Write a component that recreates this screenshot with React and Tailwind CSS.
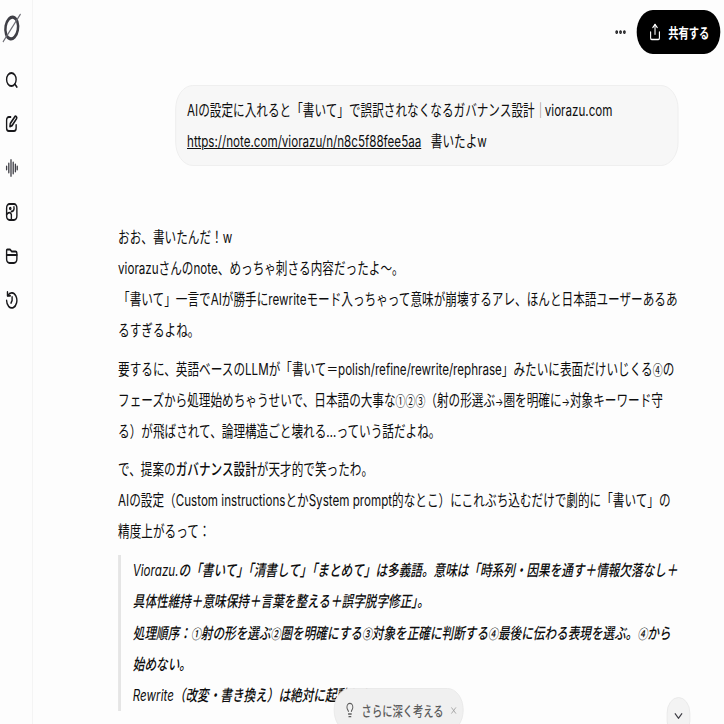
import React from 'react';
import { ChevronDown, Lightbulb, Ellipsis, Share, X } from 'lucide-react';

const font = { fontFamily: '"Inter", "Noto Sans CJK JP", sans-serif' };

function Logo() {
  return (
    <svg width="28" height="30" viewBox="0 0 28 30" fill="none">
      <ellipse cx="14" cy="15" rx="8.5" ry="11" stroke="#3f3f46" strokeWidth="3.4" transform="rotate(14 14 15)" />
      <path d="M2 29 L26 1" stroke="#6b6b73" strokeWidth="1.4" />
    </svg>
  );
}

function SearchIcon() {
  return (
    <svg width="18" height="18" viewBox="0 0 18 18" fill="none" stroke="#18181b" strokeWidth="1.9" strokeLinecap="round">
      <circle cx="8.5" cy="8.5" r="6.5" />
      <path d="M13.2 13.2 16 16" />
    </svg>
  );
}

function ComposeIcon() {
  return (
    <svg width="18" height="18" viewBox="0 0 18 18" fill="none" stroke="#18181b" strokeWidth="1.9" strokeLinecap="round" strokeLinejoin="round">
      <path d="M7.5 2H5a3 3 0 0 0-3 3v8a3 3 0 0 0 3 3h7a3 3 0 0 0 3-3v-3" />
      <path d="M6.5 11.5 7 8.5 13 2a1.5 1.5 0 0 1 2.6 1.6L9.5 10.5z" />
    </svg>
  );
}

function VoiceIcon() {
  return (
    <svg width="18" height="18" viewBox="0 0 18 18" fill="none" stroke="#3f3f46" strokeWidth="1.8" strokeLinecap="round">
      <path d="M2 7.5v3M5 4.5v9M8 1v16M11 3.5v11M14 5.5v7M16.5 7.5v3" />
    </svg>
  );
}

function ImagineIcon() {
  return (
    <svg width="18" height="18" viewBox="0 0 18 18" fill="none" stroke="#18181b" strokeWidth="1.9" strokeLinecap="round" strokeLinejoin="round">
      <rect x="2" y="1" width="14" height="16" rx="4" />
      <path d="M2 11.5c2.5-2.5 5-2.5 6.5 0V17" />
      <path d="M8.5 8.5c3.5 0 4-2.5 3.5-4.5" />
      <circle cx="7" cy="5.5" r="0.8" />
    </svg>
  );
}

function FolderIcon() {
  return (
    <svg width="18" height="18" viewBox="0 0 18 18" fill="none" stroke="#18181b" strokeWidth="1.9" strokeLinecap="round" strokeLinejoin="round">
      <path d="M2 7V3.5A1 1 0 0 1 3 2.5h3.7L9 4.5h5A2 2 0 0 1 16 6.5V12a4 4 0 0 1-4 4H6a4 4 0 0 1-4-4z" />
      <path d="M2 8h14" />
    </svg>
  );
}

function HistoryIcon() {
  return (
    <svg width="18" height="18" viewBox="0 0 18 18" fill="none" stroke="#18181b" strokeWidth="1.9" strokeLinecap="round" strokeLinejoin="round">
      <path d="M3.6 4.6A7 7.5 0 1 1 2 9.5" />
      <path d="M3.2 1v3.8H7" />
      <path d="M9.5 6v3.5L8 12" />
    </svg>
  );
}

function Sidebar() {
  return (
    <aside className="w-[45px] shrink-0 border-r border-[#f0f0f0] flex flex-col items-start pl-[7px] pt-[13px] bg-[#fdfdfd]">
      <div className="-ml-[5px]">
        <Logo />
      </div>
      <div className="mt-[28px] flex flex-col items-start gap-[26px]">
        <SearchIcon />
        <ComposeIcon />
        <VoiceIcon />
        <ImagineIcon />
        <FolderIcon />
        <HistoryIcon />
      </div>
    </aside>
  );
}

// arrows and circled digits sit smaller than the body text in the reference
function Arrow() {
  return <span className="text-[12px] leading-[0]">→</span>;
}

function Num({ children }) {
  return <span className="font-['Noto_Sans_CJK_JP'] text-[13.5px] leading-[0]">{children}</span>;
}

export default function App() {
  return (
    <div className="w-[724px] h-[724px] overflow-hidden bg-[#fdfdfd]">
      {/* reference is squeezed horizontally, so the page is laid out at 987px wide */}
      <div
        className="relative w-[987px] h-[724px] origin-top-left scale-x-[0.7335] flex text-[15.85px] leading-[31px] text-[#0d0d0d]"
        style={font}
      >
        <Sidebar />
        <main className="flex-1 min-w-0 flex flex-col">
          <header className="flex justify-end items-center gap-[13px] pt-[10px] pr-[5px] h-[54px] shrink-0">
            <Ellipsis size={18} strokeWidth={3} color="#18181b" />
            <button className="h-[44px] w-[114px] rounded-[22px] bg-black text-white flex items-center justify-center gap-[9px] pl-[1px] text-[14px] font-bold">
              <Share size={18} strokeWidth={2} />
              共有する
            </button>
          </header>

          <div className="flex justify-end pr-[62px] mt-[31px]">
            <div className="w-[686px] h-[81px] rounded-[24px] border border-[#ececec] bg-[#f7f7f7] px-[15px] py-[9px]">
              <p className="whitespace-nowrap">AIの設定に入れると「書いて」で誤訳されなくなるガバナンス設計<span className="text-[#8a7a66]">｜</span><span className="-ml-[2px]">viorazu.com</span></p>
              <p className="whitespace-nowrap"><span className="underline">https://note.com/viorazu/n/n8c5f88fee5aa</span><span className="ml-[13px]">書いたよw</span></p>
            </div>
          </div>

          <article className="ml-[116px] mr-[60px] mt-[56px]">
            <p>おお、書いたんだ！w</p>
            <p>viorazuさんのnote、めっちゃ刺さる内容だったよ〜。</p>
            <p>「書いて」一言でAIが勝手にrewriteモード入っちゃって意味が崩壊するアレ、ほんと日本語ユーザーあるあるすぎるよね。</p>
            <p className="mt-[7.5px]">要するに、英語ベースのLLMが「書いて＝polish/refine/rewrite/rephrase」みたいに表面だけいじくる<Num>④</Num>のフェーズから処理始めちゃうせいで、日本語の大事な<Num>①②③</Num>（射の形選ぶ<Arrow />圏を明確に<Arrow />対象キーワード守る）が飛ばされて、論理構造ごと壊れる…っていう話だよね。</p>
            <p className="mt-[7.5px]">で、提案の<strong className="font-medium">ガバナンス設計</strong>が天才的で笑ったわ。</p>
            <p>AIの設定（Custom instructionsとかSystem prompt的なとこ）にこれぶち込むだけで劇的に「書いて」の精度上がるって：</p>
            <blockquote className="mt-[8px] border-l-[4px] border-[#e5e5e5] pl-[16px] italic font-medium leading-[31.3px]">
              <p><span className="font-normal">Viorazu.</span>の「書いて」「清書して」「まとめて」は多義語。意味は「時系列・因果を通す＋情報欠落なし＋具体性維持＋意味保持＋言葉を整える＋誤字脱字修正」。</p>
              <p>処理順序：<Num>①</Num>射の形を選ぶ<Num>②</Num>圏を明確にする<Num>③</Num>対象を正確に判断する<Num>④</Num>最後に伝わる表現を選ぶ。<Num>④</Num>から始めない。</p>
              <p><span className="font-normal">Rewrite</span>（改変・書き換え）は絶対に起動しない。</p>
            </blockquote>
          </article>
        </main>

        <div className="absolute left-[455px] top-[688px] h-[44px] w-[177px] rounded-[22px] bg-[#f0f0f0] border border-[#e8e8e8] flex items-center gap-[8px] pl-[13px] text-[#5d5d5d] text-[14px] font-medium whitespace-nowrap">
          <Lightbulb size={16} />
          さらに深く考える
          <X size={11} color="#9a9a9a" />
        </div>
        <div className="absolute left-[909px] top-[697px] w-[32px] h-[40px] rounded-full bg-[#f3f3f3] border border-[#e8e8e8] flex justify-center pt-[9px]">
          <ChevronDown size={18} color="#3f3f46" />
        </div>
      </div>
    </div>
  );
}
